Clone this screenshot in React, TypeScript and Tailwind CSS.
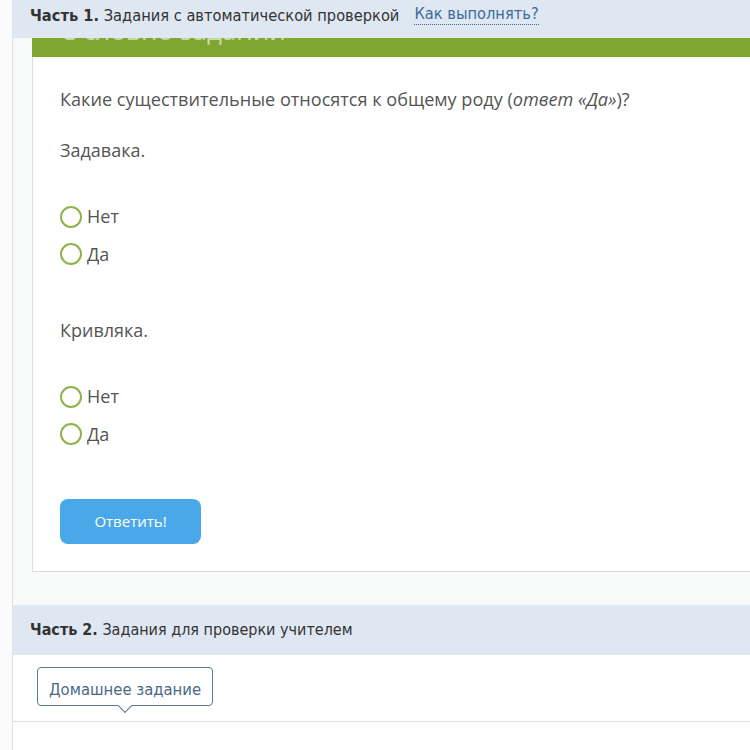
import React from 'react'

const narrow = '"Liberation Sans Narrow", "DejaVu Sans Condensed", "Liberation Sans", sans-serif'
const body = '"Open Sans", "Noto Sans", sans-serif'

function Radio({ label }: { label: string }) {
  return (
    <label className="flex items-center gap-[5px] h-[37.5px]">
      <span className="w-[22px] h-[22px] rounded-full border-2 border-[#8cb34d] bg-white" />
      <span className="text-[18px] text-[#555]">{label}</span>
    </label>
  )
}

function Question({ word }: { word: string }) {
  return (
    <div>
      <p className="text-[18px] text-[#555] leading-[24px]">{word}</p>
      <div className="mt-[36px] flex flex-col">
        <Radio label="Нет" />
        <Radio label="Да" />
      </div>
    </div>
  )
}

export default function App() {
  return (
    <div className="w-[750px] h-[750px] overflow-hidden bg-white flex">
      <div className="w-[13px] shrink-0 bg-[#fbfbfb] border-r border-[#e2e2e2]" />
      <div className="flex-1 flex flex-col bg-[#f8f9f9] min-w-0">
        <div
          className="h-[38px] shrink-0 bg-[#dfe8f2] pl-[17px] pt-[4px] flex items-start gap-[15px] text-[16.3px] text-[#333]"
          style={{ fontFamily: narrow }}
        >
          <span>
            <b className="font-bold">Часть 1.</b> Задания с автоматической проверкой
          </span>
          <span className="text-[#3d6b9c] border-b border-dotted border-[#3d6b9c] leading-[20px]">Как выполнять?</span>
        </div>

        <div className="ml-[19px] flex flex-col">
          <div className="h-[19px] bg-[#80a631] overflow-hidden">
            <div
              className="-mt-[23px] pl-[28px] text-[26px] leading-[30px] text-white/60 whitespace-nowrap"
              style={{ fontFamily: body }}
            >
              С словно задании
            </div>
          </div>
          <div
            className="bg-white border-l border-b border-[#dcdcdc] h-[515px] pl-[27px] pt-[30px]"
            style={{ fontFamily: body }}
          >
            <p className="text-[18.1px] text-[#555] leading-[24px]">
              Какие существительные относятся к общему роду (<i>ответ «Да»</i>)?
            </p>
            <div className="mt-[27px]">
              <Question word="Задавака." />
            </div>
            <div className="mt-[45px]">
              <Question word="Кривляка." />
            </div>
            <button className="mt-[46px] w-[141px] h-[45px] rounded-[8px] bg-[#4ba8e8] text-white text-[15px]">
              Ответить!
            </button>
          </div>
        </div>

        <div className="h-[33px] shrink-0" />

        <div
          className="h-[50px] shrink-0 bg-[#dfe8f2] pl-[17px] flex items-center text-[16px] text-[#333]"
          style={{ fontFamily: narrow }}
        >
          <span>
            <b className="font-bold">Часть 2.</b> Задания для проверки учителем
          </span>
        </div>

        <div className="h-[67px] shrink-0 bg-white border-b border-[#dedede] pl-[24px] pt-[12px]">
          <div className="relative inline-flex">
            <div
              className="h-[39px] px-[11px] pt-[7px] flex items-center rounded-[4px] border border-[#5b7894] text-[16.5px] text-[#4a6987] bg-white"
              style={{ fontFamily: narrow }}
            >
              Домашнее задание
            </div>
            <span className="absolute left-[83px] top-[34px] w-[10px] h-[10px] bg-white border-r border-b border-[#5b7894] rotate-45" />
          </div>
        </div>
        <div className="flex-1 bg-white" />
      </div>
    </div>
  )
}
